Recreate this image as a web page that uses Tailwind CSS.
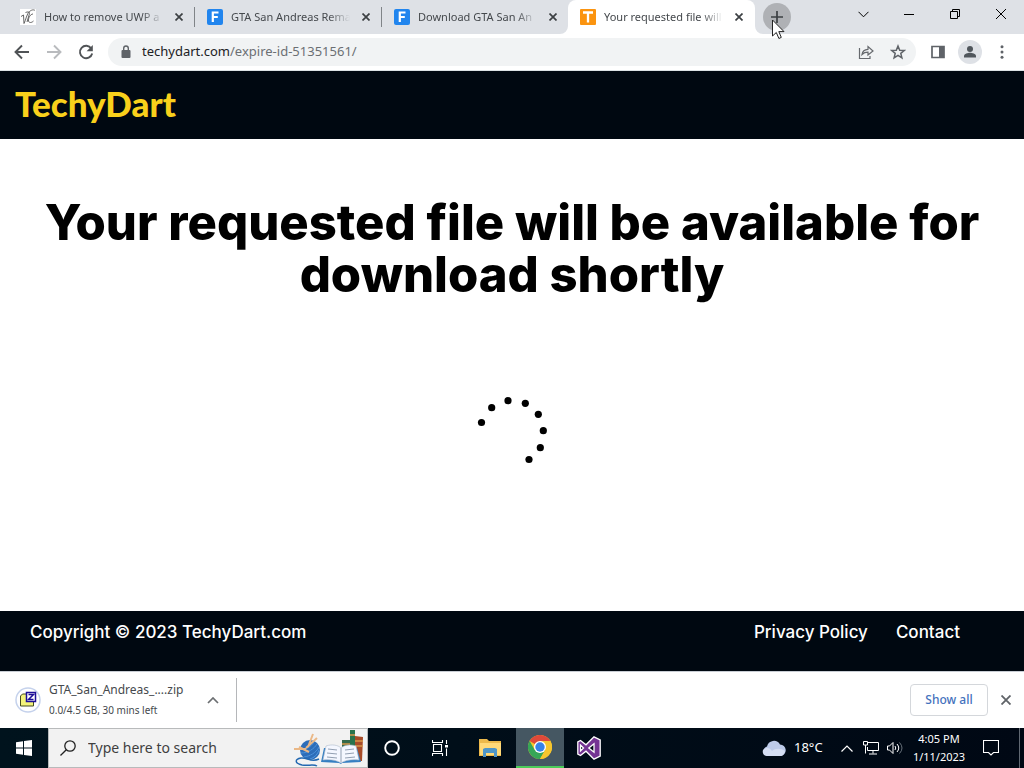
<!DOCTYPE html>
<html lang="en">
<head>
  <meta charset="UTF-8">
  <meta name="viewport" content="width=device-width, initial-scale=1.0">
  <title>Your requested file will be available for download shortly</title>
  <script src="https://cdn.jsdelivr.net/npm/@tailwindcss/browser@4"></script>
</head>
<body class="flex min-h-screen flex-col bg-white font-['Noto_Sans','Open_Sans',sans-serif] text-[#45494d]">

  <!-- Tab strip -->
  <div class="flex h-[34px] shrink-0 justify-between bg-[#dee1e6]">
    <div class="flex min-w-0 pl-2 text-[11px]">
      <div class="flex w-[187px] items-center gap-2 pr-2 pl-3">
        <svg class="size-4 shrink-0 bg-white" viewBox="0 0 16 16" fill="none" stroke="#555" stroke-width=".9"><path d="M1 7.500l2.500-1.500L4 14.500C6 11 6.500 5 9.500 2.500S14.500 1 15 1.500M5.500 3.500C8 2.500 10 3 9.500 4.500L7 13M13 5c-2.500 0-5 4-4.500 7 .5 2 3 2 5 0"/></svg>
        <a href="#" class="min-w-0 flex-1 whitespace-nowrap [mask-image:linear-gradient(to_right,black_82%,transparent)]">How to remove UWP a</a>
        <button class="flex size-4 items-center justify-center" aria-label="Close tab"><svg class="size-2" viewBox="0 0 8 8" stroke="#3c4043" stroke-width="1.7"><path d="M.5.5l7 7M7.5.5l-7 7"/></svg></button>
      </div>
      <div class="my-auto -ml-px h-5 w-px bg-[#808488]"></div>
      <div class="flex w-[187px] items-center gap-2 pr-2 pl-3">
        <svg class="size-4 shrink-0" viewBox="0 0 16 16"><rect width="16" height="16" rx="2" fill="#2185ee"/><path d="M5.8 13V3.500h5.700M5.800 8h5" fill="none" stroke="#fff" stroke-width="2.200"/></svg>
        <a href="#" class="min-w-0 flex-1 whitespace-nowrap [mask-image:linear-gradient(to_right,black_82%,transparent)]">GTA San Andreas Rema</a>
        <button class="flex size-4 items-center justify-center" aria-label="Close tab"><svg class="size-2" viewBox="0 0 8 8" stroke="#3c4043" stroke-width="1.7"><path d="M.5.5l7 7M7.5.5l-7 7"/></svg></button>
      </div>
      <div class="my-auto -ml-px h-5 w-px bg-[#808488]"></div>
      <div class="flex w-[187px] items-center gap-2 pr-2 pl-3">
        <svg class="size-4 shrink-0" viewBox="0 0 16 16"><rect width="16" height="16" rx="2" fill="#2185ee"/><path d="M5.8 13V3.500h5.700M5.800 8h5" fill="none" stroke="#fff" stroke-width="2.200"/></svg>
        <a href="#" class="min-w-0 flex-1 whitespace-nowrap [mask-image:linear-gradient(to_right,black_82%,transparent)]">Download GTA San An</a>
        <button class="flex size-4 items-center justify-center" aria-label="Close tab"><svg class="size-2" viewBox="0 0 8 8" stroke="#3c4043" stroke-width="1.7"><path d="M.5.5l7 7M7.5.5l-7 7"/></svg></button>
      </div>
      <div class="relative -ml-px flex w-[187px] items-center gap-2 rounded-t-lg bg-white pr-2 pl-3">
        <svg class="absolute bottom-0 -left-2 size-2" viewBox="0 0 8 8"><path d="M8 0v8H0a8 8 0 0 0 8-8" fill="#fff"/></svg>
        <svg class="absolute -right-2 bottom-0 size-2" viewBox="0 0 8 8"><path d="M0 0v8h8a8 8 0 0 1-8-8" fill="#fff"/></svg>
        <svg class="size-4 shrink-0" viewBox="0 0 16 16"><rect width="16" height="16" rx="1" fill="#fb9410"/><path d="M3 3.500h10M8 3v10.500" fill="none" stroke="#fff" stroke-width="2.300"/></svg>
        <a href="#" class="min-w-0 flex-1 whitespace-nowrap [mask-image:linear-gradient(to_right,black_82%,transparent)]">Your requested file will</a>
        <button class="flex size-4 items-center justify-center" aria-label="Close tab"><svg class="size-2" viewBox="0 0 8 8" stroke="#3c4043" stroke-width="1.7"><path d="M.5.5l7 7M7.5.5l-7 7"/></svg></button>
      </div>
      <div class="relative my-auto ml-2">
        <button class="flex size-7 items-center justify-center rounded-full bg-[#afb1b5]" aria-label="New tab"><svg class="size-3" viewBox="0 0 12 12" stroke="#3c4043" stroke-width="1.7"><path d="M6 0v12M0 6h12"/></svg></button>
        <!-- Mouse pointer -->
        <svg class="absolute top-4 left-2 h-[22px] w-[14px]" viewBox="0 0 14 22"><path d="M1.500 1v16l3.800-3.500 2.600 6 2.400-1.100-2.500-5.800h5.200z" fill="#fff" stroke="#222" stroke-width="1"/></svg>
      </div>
    </div>
    <div class="flex h-7 text-black">
      <button class="flex w-[46px] items-center justify-center" aria-label="Search tabs"><svg class="h-[7px] w-[11px]" viewBox="0 0 11 7" fill="none" stroke="currentColor"><path d="M.5.8l5 5 5-5"/></svg></button>
      <button class="flex w-[46px] items-center justify-center" aria-label="Minimize"><span class="h-px w-2.5 bg-black"></span></button>
      <button class="flex w-[46px] items-center justify-center" aria-label="Restore"><svg class="size-2.5" viewBox="0 0 10 10" fill="none" stroke="currentColor"><path d="M.5 2.500h7v7h-7zM2.500 2.500v-2h7v7h-2"/></svg></button>
      <button class="flex w-[46px] items-center justify-center" aria-label="Close"><svg class="size-2.5" viewBox="0 0 10 10" fill="none" stroke="currentColor"><path d="M0 0l10 10M10 0L0 10"/></svg></button>
    </div>
  </div>

  <!-- Toolbar -->
  <div class="flex h-[37px] shrink-0 items-center border-b border-[#dce2e5] px-3.5">
    <div class="flex gap-4 pr-3.5">
      <button aria-label="Back"><svg class="size-4" viewBox="0 0 16 16" fill="none" stroke="#505356" stroke-width="1.900"><path d="M15 8H2M8 1.500L1.500 8 8 14.500"/></svg></button>
      <button aria-label="Forward"><svg class="size-4" viewBox="0 0 16 16" fill="none" stroke="#b9bbbe" stroke-width="1.900"><path d="M1 8h13M8 1.500L14.500 8 8 14.500"/></svg></button>
      <button aria-label="Reload"><svg class="size-4" viewBox="0 0 16 16"><path d="M13.300 4.500A6.200 6.200 0 1 0 14.200 9.500" fill="none" stroke="#505356" stroke-width="1.900"/><path d="M14.800 1v6.200H8.600z" fill="#505356"/></svg></button>
    </div>
    <div class="flex h-7 min-w-0 flex-1 items-center rounded-full bg-[#f1f3f4] pr-2.5 pl-3">
      <svg class="h-3.5 w-3 shrink-0" viewBox="0 0 12 14"><rect x="1.500" y="5" width="9" height="8" rx="1" fill="#5f6368"/><path d="M3.700 5V3.300a2.300 2.300 0 0 1 4.600 0V5" fill="none" stroke="#5f6368" stroke-width="1.400"/></svg>
      <div class="ml-2.5 min-w-0 flex-1 truncate text-[13px] text-[#6b6f73]"><span class="text-[#202124]">techydart.com</span>/expire-id-51351561/</div>
      <div class="flex gap-4">
        <button aria-label="Share"><svg class="size-4" viewBox="0 0 16 16" fill="none" stroke="#66696d" stroke-width="1.200"><path d="M1.500 4v10.500H12V12M4 10.500c.5-3.500 2.800-5 6-5.200V2.500L15 7l-5 4V8.200c-2.500 0-4.500.8-6 2.300z"/></svg></button>
        <button aria-label="Bookmark"><svg class="size-4" viewBox="0 0 16 16" fill="none" stroke="#5f6368" stroke-width="1.500"><path d="M8 2l1.700 4.200 4.600.3-3.500 2.900 1.100 4.400L8 11.400l-3.900 2.400 1.100-4.400-3.500-2.900 4.600-.3z"/></svg></button>
      </div>
    </div>
    <div class="flex items-center pl-3.5">
      <button aria-label="Side panel"><svg class="size-4" viewBox="0 0 16 16"><path d="M2 2.500h12v11H2z" fill="none" stroke="#5f6368" stroke-width="1.700"/><path d="M9 2h5v12H9z" fill="#5f6368"/></svg></button>
      <button class="ml-3 flex size-6 items-center justify-center rounded-full bg-[#dee1e6] p-1" aria-label="Profile"><svg class="size-4" viewBox="0 0 16 16" fill="#50565c"><circle cx="8" cy="5" r="3"/><path d="M2 13.500v-1.500c0-2.400 4-3.300 6-3.300s6 .9 6 3.300v1.500z"/></svg></button>
      <button class="ml-3" aria-label="Menu"><svg class="size-4" viewBox="0 0 16 16" fill="#5f6368"><circle cx="8" cy="2.800" r="1.500"/><circle cx="8" cy="8" r="1.500"/><circle cx="8" cy="13.200" r="1.500"/></svg></button>
    </div>
  </div>

  <!-- Page -->
  <header class="h-[68px] shrink-0 bg-[#000811] px-[15px] pt-3">
    <a href="#" class="font-['Lato',sans-serif] text-[35px] leading-10 font-black text-[#f9d01b]">TechyDart</a>
  </header>

  <main class="flex flex-1 flex-col items-center bg-white px-5 pt-[58px]">
    <h1 class="text-center font-['Inter',sans-serif] text-[49px] leading-[52px] font-extrabold text-black">Your requested file will be available for download shortly</h1>
    <!-- Spinner -->
    <svg class="mt-[96px] size-[70px]" viewBox="0 0 70 70" fill="#000">
      <circle cx="4.500" cy="25.500" r="3.600"/>
      <circle cx="14.700" cy="10.700" r="3.600"/>
      <circle cx="31" cy="3.700" r="3.600"/>
      <circle cx="48.300" cy="6.300" r="3.600"/>
      <circle cx="61.300" cy="17.300" r="3.600"/>
      <circle cx="66.300" cy="33.700" r="3.600"/>
      <circle cx="63.300" cy="50.700" r="3.600"/>
      <circle cx="52" cy="62.500" r="3.600"/>
    </svg>
  </main>

  <footer class="flex h-[60px] shrink-0 justify-between bg-[#000811] pt-2 pr-16 pl-[30px] font-['Inter',sans-serif] text-[17px] leading-[26px] font-medium text-white">
    <p>Copyright © 2023 TechyDart.com</p>
    <nav class="flex gap-7"><a href="#">Privacy Policy</a><a href="#">Contact</a></nav>
  </footer>

  <!-- Download shelf -->
  <div class="flex h-[57px] shrink-0 items-center border-t border-[#c8cdd4] bg-white">
    <div class="flex h-11 w-[237px] items-center border-r border-[#b5b7ba] pl-[15px]">
      <svg class="size-[26px] shrink-0" viewBox="0 0 26 26"><circle cx="13" cy="13" r="12" fill="#fff" stroke="#c5d2ec" stroke-width="1.500"/><path d="M5.500 9l2-2h4v2h7v10h-13z" fill="#f3f37b" stroke="#444a20"/><path d="M11.500 5.500h9v9h-9z" fill="#fff" stroke="#1c0e98" stroke-width="1.500"/><path d="M13.500 7.500h5l-5 5h5" fill="none" stroke="#1c0e98" stroke-width="1.500"/></svg>
      <div class="ml-2 w-[150px]">
        <p class="text-xs leading-5">GTA_San_Andreas_....zip</p>
        <p class="text-[10px] leading-5">0.0/4.5 GB, 30 mins left</p>
      </div>
      <button class="ml-2" aria-label="Download options"><svg class="h-[7px] w-3" viewBox="0 0 12 7" fill="none" stroke="#6b6e71" stroke-width="1.700"><path d="M1 6l5-5 5 5"/></svg></button>
    </div>
    <button class="ml-auto h-8 w-[78px] rounded border border-[#d4d7db] text-xs font-medium text-[#4472bd]">Show all</button>
    <button class="mx-3 p-px" aria-label="Close downloads"><svg class="size-2.5" viewBox="0 0 10 10" stroke="#5f6368" stroke-width="1.800"><path d="M.5.5l9 9M9.500.5l-9 9"/></svg></button>
  </div>

  <!-- Taskbar -->
  <div class="flex h-10 shrink-0 bg-linear-to-r from-[#00131d] to-[#000814] text-white">
    <button class="flex w-12 items-center justify-center" aria-label="Start"><svg class="size-4" viewBox="0 0 16 16" fill="#fff"><path d="M0 2.200l7-1v6.300H0zM8 1.100L16 0v7.500H8zM0 8.500h7v6.300l-7-1zM8 8.500h8V16l-8-1.100z"/></svg></button>
    <label class="flex w-80 items-center border border-[#b8babb] bg-[#f2f2f2] pl-[11px]">
      <svg class="size-4 shrink-0" viewBox="0 0 16 16" fill="none" stroke="#222" stroke-width="1.300"><circle cx="10" cy="6" r="5.200"/><path d="M6.300 9.700L.5 15.500"/></svg>
      <input type="text" placeholder="Type here to search" class="ml-3 min-w-0 flex-1 text-sm placeholder:text-[#3f3f3f]" aria-label="Search">
      <svg class="h-[38px] w-[75px] shrink-0" viewBox="0 0 75 38">
        <circle cx="18" cy="21" r="10" fill="#2d6db9"/>
        <path d="M9 20c4 1 10-2 13-7M9 24c7 0 13-4 16-9M12 28c6-1 12-4 15-10M18 30c4-1 8-5 9-9" stroke="#4b93dc" fill="none"/>
        <path d="M21 5l-5 13M25 9L14 19M7 18l10 5M2 20l12 0" stroke="#eab887" stroke-width="2"/>
        <path d="M27 30c-8 4-12-2-18-1s-7 5 1 7c6 1 12-1 15 1" fill="none" stroke="#2268b1" stroke-width="1.500"/>
        <path d="M58 1h5v30h-5z" fill="#28734c"/><path d="M50 11h8v20h-8z" fill="#35694a"/><path d="M63 7l8 1-1 24h-7z" fill="#a84c28"/>
        <path d="M50 15h8M58 6h5M63 12h8M63 17h8" stroke="#d8964a" stroke-width="1.500"/>
        <path d="M32 19h33l4 14-19 1-1 1-2-1-18-1z" fill="#357fc2"/>
        <path d="M34 17c6-2 12-1 15 2 3-3 9-4 15-2l3 14c-6-1-14 0-18 3-4-3-12-4-18-3z" fill="#f4f7ff" stroke="#adbacb" stroke-width=".6"/>
        <path d="M49 19v14M36 20l9 1M35 24l10 1M35 28l10 1M53 21l9-1M53 25l9-1M53 29l10-1" stroke="#929fb2"/>
      </svg>
    </label>
    <button class="flex w-12 items-center justify-center" aria-label="Cortana"><svg class="size-4" viewBox="0 0 16 16" fill="none" stroke="#fff" stroke-width="1.900"><circle cx="8" cy="8" r="6.800"/></svg></button>
    <button class="flex w-12 items-center justify-center" aria-label="Task view"><svg class="size-4" viewBox="0 0 16 16" fill="none" stroke="#fff" stroke-width="1.100"><path d="M.5 0v2.500h10V0M.5 16v-2.500h10V16M1.500 4.500h8v7h-8zM14.500 0v4M14.500 8.500V16"/><path d="M13 5h3v2.500h-3z" fill="#fff" stroke="none"/></svg></button>
    <button class="flex w-[52px] items-center justify-center" aria-label="File Explorer"><svg class="h-[18px] w-[22px]" viewBox="0 0 22 18"><path d="M0 0h8l2 2h12v15H0z" fill="#ecb94b"/><path d="M1 4h21v12H1z" fill="#ffd978"/><path d="M4 18v-8l2-1h10l2 1v8h-3v-4H7v4z" fill="#4e95c7"/></svg></button>
    <button class="flex w-12 items-center justify-center border-b-2 border-[#4ccb59] bg-[#455762]" aria-label="Chrome"><svg class="size-6" viewBox="0 0 24 24"><circle cx="12" cy="12" r="12" fill="#f6c52e"/><path d="M12 12L1.600 6A12 12 0 0 1 22.400 6H12z" fill="#df493a"/><path d="M1.600 6A12 12 0 0 0 12 24l5.200-9L12 12 6.800 15z" fill="#36a657"/><path d="M12 6h10.400A12 12 0 0 1 12 24l5.200-9z" fill="#f6c52e"/><circle cx="12" cy="12" r="6" fill="#fff"/><circle cx="12" cy="12" r="4.700" fill="#3782e8"/></svg></button>
    <button class="flex w-[50px] items-center justify-center" aria-label="Visual Studio"><svg class="size-6" viewBox="0 0 24 24" fill="#743493" stroke="#fff" stroke-width="1.300"><path fill-rule="evenodd" d="M17 .8l6.200 3v16.400L17 23.200l-8-8-5.500 4.300L.8 18V6l2.700-1.500L9 8.800zM17 7.800L11.800 12l5.200 4.200zM3.500 9v6l3-3z"/></svg></button>

    <div class="ml-auto flex items-center">
      <svg class="h-4 w-6" viewBox="0 0 24 16"><path d="M5 16a5 5 0 0 1 0-9.500A7 7 0 0 1 18 4.500a5.800 5.800 0 0 1 1 11.500z" fill="#bdcbea"/><path d="M1 10c4-4 8-1 9 1 3-3 9-3 13 0-1 3-2 5-5 5H5c-3 0-5-3-4-6z" fill="#d5def3"/></svg>
      <span class="ml-2 w-[30px] text-[13px] whitespace-nowrap">18°C</span>
      <button class="ml-[17px]" aria-label="Show hidden icons"><svg class="h-[7px] w-3" viewBox="0 0 12 7" fill="none" stroke="#fff" stroke-width="1.200"><path d="M.5 6.500L6 1l5.500 5.500"/></svg></button>
      <svg class="ml-2.5 h-3.5 w-4" viewBox="0 0 16 14" fill="none" stroke="#fff"><path d="M5 1.500h10.500v8h-11V6M.5.5h4V4h-4zM2.500 4v8.500M10 9.500v3M6 13h8"/></svg>
      <svg class="ml-2 h-3.5 w-4" viewBox="0 0 16 14" fill="none" stroke="#fff"><path d="M.5 5h2L6 1.500v11L2.500 9h-2zM8 5q1.500 2 0 4M10 3q3.500 4 0 8"/><path d="M12.500 1.500q5 5.500 0 11" stroke="#68717a"/></svg>
      <div class="ml-1.5 w-[60px] text-center text-[11px] leading-[18px]"><p>4:05 PM</p><p>1/11/2023</p></div>
      <button class="ml-3.5" aria-label="Notifications"><svg class="size-4" viewBox="0 0 16 16" fill="none" stroke="#fff" stroke-width="1.100"><path d="M.5.5h15v12h-5L8 15l-2.500-2.500h-5z"/></svg></button>
      <div class="mr-1 ml-5 h-10 w-px bg-[#606872]"></div>
    </div>
  </div>
</body>
</html>
